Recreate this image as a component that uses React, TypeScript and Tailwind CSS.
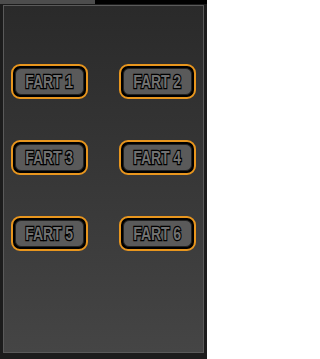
const buttons = ["FART 1", "FART 2", "FART 3", "FART 4", "FART 5", "FART 6"];

function FartButton({ label }: { label: string }) {
  return (
    <button className="flex h-[35px] w-[77px] items-center justify-center rounded-[9px] border-2 border-[#e8961e] bg-black p-[2px]">
      <span className="flex h-full w-full items-center justify-center rounded-[6px] border border-[#222] bg-[#5a5a5a]">
        <span className="inline-block scale-x-[0.74] whitespace-nowrap text-[19px] font-bold leading-none tracking-[-0.2px] text-[#727272] [font-family:'Liberation_Sans',Arial,sans-serif] [paint-order:stroke_fill] [-webkit-text-stroke:2.6px_#000]">
          {label}
        </span>
      </span>
    </button>
  );
}

export default function App() {
  return (
    <div className="h-[359px] w-[207px] overflow-hidden bg-[#1c1c1c]">
      <div className="flex h-[4px]">
        <div className="w-[95px] bg-[#4d4d4d]" />
        <div className="flex-1 bg-black" />
      </div>
      <div className="mx-[3px] mt-[1px] h-[348px] border border-[#5a5a5a] bg-gradient-to-b from-[#2a2a2a] to-[#454545] pl-[7px] pr-[5px] pt-[58px]">
        <div className="grid grid-cols-[77px_77px] gap-x-[31px] gap-y-[41px]">
          {buttons.map((b) => (
            <FartButton key={b} label={b} />
          ))}
        </div>
      </div>
    </div>
  );
}
